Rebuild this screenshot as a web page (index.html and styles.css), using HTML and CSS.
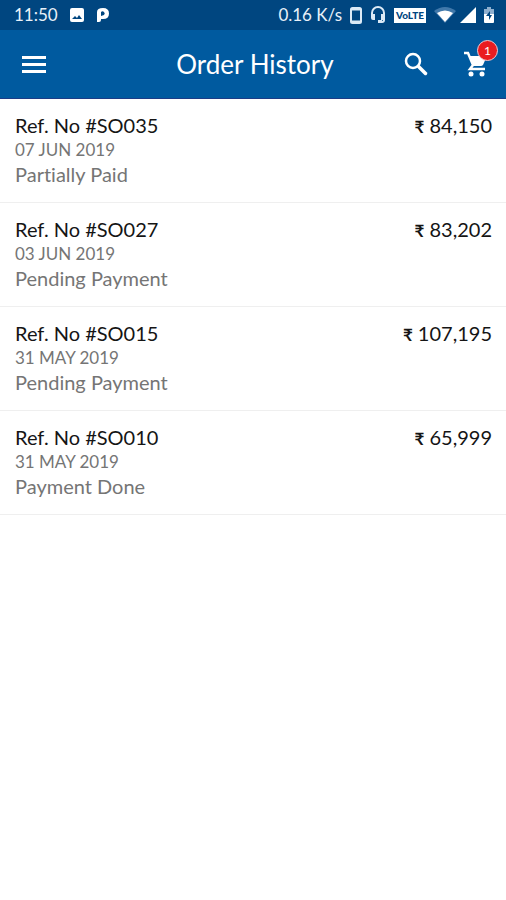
FILE: index.html
```html
<!DOCTYPE html>
<html lang="en">
<head>
<meta charset="utf-8">
<meta name="viewport" content="width=device-width, initial-scale=1">
<title>Order History</title>
<link rel="stylesheet" href="styles.css">
</head>
<body>
<div class="status-bar">
  <div class="status-left">
    <span>11:50</span>
    <svg width="14" height="14" viewBox="0 0 14 14" aria-hidden="true"><path fill="#fff" fill-rule="evenodd" d="M2 0h10a2 2 0 0 1 2 2v10a2 2 0 0 1-2 2H2a2 2 0 0 1-2-2V2a2 2 0 0 1 2-2zM2 11h10L9 7 7 10 5 8z"/></svg>
    <svg width="14" height="16" viewBox="0 0 14 16" aria-hidden="true"><path fill="#fff" fill-rule="evenodd" d="M1 15V5Q1 1 7 1q6 0 6 5.500T7 12H5v1q0 2-2 2zM5 5v4l3-1a2 2 0 1 0-3-3z"/></svg>
  </div>
  <div class="status-right">
    <span>0.16 K/s</span>
    <svg width="12" height="17" viewBox="0 0 12 17" aria-hidden="true"><rect x="1" y="1" width="10" height="15" rx="1.500" fill="none" stroke="#dceaf6" stroke-width="2"/><path d="M2 2.500h8M2 14.500h8" stroke="#dceaf6" stroke-width="2"/></svg>
    <svg width="16" height="18" viewBox="0 0 16 18" aria-hidden="true"><path d="M2 10V7a6 6 0 0 1 12 0v7q0 2-2 2H9" fill="none" stroke="#dceaf6" stroke-width="2"/><path fill="#dceaf6" d="M1 8h4v6H3q-2 0-2-2zM11 8h4v6h-4zM8 14h4v3H8z"/></svg>
    <span class="volte">VoLTE</span>
    <svg class="wifi" width="22" height="16" viewBox="0 0 22 16" aria-hidden="true"><path fill="#4078aa" d="M0 4q11-8 22 0L11 16z"/><path fill="#fff" d="M3 6q8-5 16 0l-8 9z"/></svg>
    <svg width="16" height="16" viewBox="0 0 16 16" aria-hidden="true"><path fill="#fff" d="M16 0v16H0z"/></svg>
    <svg class="battery" width="10" height="17" viewBox="0 0 10 17" aria-hidden="true"><path fill="#8eafce" d="M3 0h4v2h3v6H0V2h3z"/><path fill="#fff" d="M0 7h10v8q0 1-1 1H1q-1 0-1-1z"/><path fill="#004680" d="M6 4 2 9h3v4l3-5H6z"/></svg>
  </div>
</div>
<header class="app-bar">
  <button class="icon-button menu" type="button" aria-label="Menu"><svg width="24" height="18" viewBox="0 0 24 18"><path fill="#fff" d="M0 1h24v3H0zM0 8h24v3H0zM0 15h24v3H0z"/></svg></button>
  <h1>Order History</h1>
  <div class="actions">
    <button class="icon-button" type="button" aria-label="Search"><svg width="24" height="24" viewBox="0 0 24 24"><circle cx="9" cy="9" r="7" fill="none" stroke="#fff" stroke-width="2.500"/><path d="m14.500 14.500 7 7" stroke="#fff" stroke-width="3.500" stroke-linecap="round"/></svg></button>
    <button class="icon-button cart" type="button" aria-label="Cart"><svg width="24" height="26" viewBox="0 0 24 26"><path d="M0 2h4l5 12-3 4h15" fill="none" stroke="#fff" stroke-width="2.500"/><path fill="#fff" d="M5 5h18l-4 9q-1 1-2 1H9z"/><circle cx="7" cy="23" r="2.500" fill="#fff"/><circle cx="18" cy="23" r="2.500" fill="#fff"/></svg><span class="badge">1</span></button>
  </div>
</header>
<main>
  <ul class="orders">
    <li><div class="details"><h2>Ref. No #SO035</h2><p class="date">07 JUN 2019</p><p class="state">Partially Paid</p></div><span class="amount"><span class="rupee">₹</span> 84,150</span></li>
    <li><div class="details"><h2>Ref. No #SO027</h2><p class="date">03 JUN 2019</p><p class="state">Pending Payment</p></div><span class="amount"><span class="rupee">₹</span> 83,202</span></li>
    <li><div class="details"><h2>Ref. No #SO015</h2><p class="date">31 MAY 2019</p><p class="state">Pending Payment</p></div><span class="amount"><span class="rupee">₹</span> 107,195</span></li>
    <li><div class="details"><h2>Ref. No #SO010</h2><p class="date">31 MAY 2019</p><p class="state">Payment Done</p></div><span class="amount"><span class="rupee">₹</span> 65,999</span></li>
  </ul>
</main>
</body>
</html>
```
FILE: styles.css
```css
* { box-sizing: border-box; }
body, h1, h2, p, ul { margin: 0; padding: 0; }
body {
  background: #fff;
  color: #151515;
  font-family: Lato, "Noto Sans", sans-serif;
  font-variant-ligatures: none;
}
svg { display: block; flex: none; }
.status-bar {
  display: flex;
  justify-content: space-between;
  height: 30px;
  padding: 0 12px 0 14px;
  background: #004680;
  color: #e8f1f9;
  font-size: 17px;
  line-height: 32px;
}
.status-left, .status-right { display: flex; align-items: center; }
.status-left { gap: 12px; }
.status-right { gap: 8px; }
.volte {
  width: 32px;
  background: #fff;
  color: #004680;
  font-size: 10px;
  font-weight: 900;
  line-height: 15px;
  text-align: center;
}
.wifi { margin-right: -4px; }
.app-bar {
  display: grid;
  grid-template-columns: 1fr auto 1fr;
  align-items: center;
  height: 69px;
  padding: 0 18px 0 22px;
  background: #005a9f;
  border-bottom: 1px solid #1c3c86;
  color: #fff;
}
h1 { font-size: 26px; font-weight: 400; line-height: 32px; }
.icon-button { padding: 0; border: 0; background: none; }
.menu { justify-self: start; }
.actions { display: flex; justify-content: flex-end; gap: 36px; }
.cart { position: relative; }
.badge {
  position: absolute;
  top: -11px;
  right: -10px;
  width: 21px;
  height: 21px;
  border: 1px solid #f1c9cf;
  border-radius: 50%;
  background: #ea1c20;
  color: #fff;
  font: 12px/19px Lato, sans-serif;
  text-align: center;
}
.orders { list-style: none; }
.orders li {
  display: flex;
  justify-content: space-between;
  padding: 13px 14px 16px 15px;
  border-bottom: 1px solid #efefef;
}
h2, .amount { font-size: 20px; font-weight: 400; line-height: 26px; }
.date, .state { color: #757575; line-height: 24px; }
.date { font-size: 17px; }
.state { font-size: 20px; }
.rupee { font-size: 17px; font-weight: 700; }
```
